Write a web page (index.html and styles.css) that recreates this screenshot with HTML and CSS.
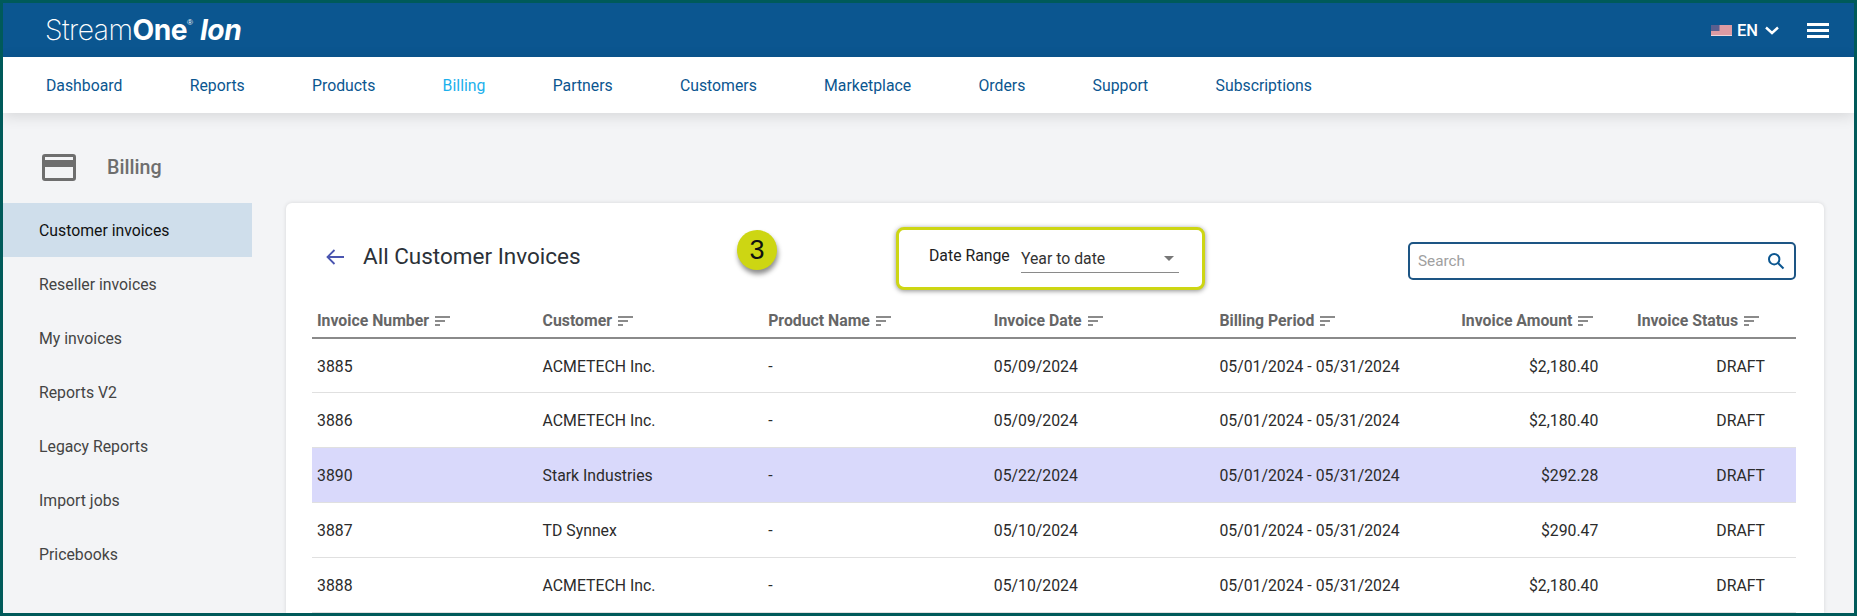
FILE: index.html
```html
<!DOCTYPE html>
<html lang="en">
<head>
<meta charset="utf-8">
<title>All Customer Invoices</title>
<link rel="stylesheet" href="styles.css">
</head>
<body>
<div class="frame">
  <header class="topbar">
    <div class="logo"><span class="logo-light">Stream</span><span class="logo-bold">One</span><sup class="logo-reg">®</sup><span class="logo-ion">Ion</span></div>
    <div class="top-actions">
      <svg class="flag" width="21" height="11" viewBox="0 0 21 11"><rect width="21" height="11" fill="#f0d4d8"/><path d="M0 1h21M0 3h21M0 5h21M0 7h21M0 9h21" stroke="#c9636f" stroke-width="1"/><rect width="8.5" height="6" fill="#5a5f8f"/></svg>
      <span class="lang">EN</span>
      <svg class="chev" width="14" height="9" viewBox="0 0 14 9"><path d="M1 1.500 7 7l6-5.500" fill="none" stroke="#fff" stroke-width="2.400"/></svg>
      <div class="burger"><i></i><i></i><i></i></div>
    </div>
  </header>
  <nav class="mainnav">
    <a>Dashboard</a><a>Reports</a><a>Products</a><a class="on">Billing</a><a>Partners</a><a>Customers</a><a>Marketplace</a><a>Orders</a><a>Support</a><a>Subscriptions</a>
  </nav>
  <div class="body">
    <aside class="side">
      <div class="side-head">
        <svg width="34" height="27" viewBox="0 0 34 27"><path fill="#6e6e6e" fill-rule="evenodd" d="M3 0h28a3 3 0 0 1 3 3v21a3 3 0 0 1-3 3H3a3 3 0 0 1-3-3V3a3 3 0 0 1 3-3Zm0 3v3h28V3H3Zm0 10v11h28V13H3Z"/></svg>
        <span>Billing</span>
      </div>
      <ul class="side-list">
        <li class="active">Customer invoices</li>
        <li>Reseller invoices</li>
        <li>My invoices</li>
        <li>Reports V2</li>
        <li>Legacy Reports</li>
        <li>Import jobs</li>
        <li>Pricebooks</li>
      </ul>
    </aside>
    <main class="card">
      <div class="badge">3</div>
      <div class="toolbar">
        <div class="title">
          <svg width="20" height="18" viewBox="0 0 20 18"><path d="M19 9H3M9.500 2 2.500 9l7 7" fill="none" stroke="#4a55b0" stroke-width="1.800"/></svg>
          <h1>All Customer Invoices</h1>
        </div>
        <div class="range">
          <span class="range-label">Date Range</span>
          <div class="select"><span>Year to date</span><i class="caret"></i></div>
        </div>
        <div class="search">
          <span>Search</span>
          <svg width="18" height="18" viewBox="0 0 18 18"><circle cx="7.200" cy="7.200" r="5.200" fill="none" stroke="#0b5690" stroke-width="2"/><path d="m11 11 5.500 5.500" stroke="#0b5690" stroke-width="2"/></svg>
        </div>
      </div>
      <table class="grid">
        <colgroup><col class="c1"><col class="c1"><col class="c1"><col class="c1"><col class="c5"><col class="c6"><col class="c7"></colgroup>
        <thead>
          <tr>
            <th>Invoice Number<svg class="sort" viewBox="0 0 15 10"><path d="M0 1h15M0 5h10M0 9h5" stroke="#666" stroke-width="1.700"/></svg></th>
            <th>Customer<svg class="sort" viewBox="0 0 15 10"><path d="M0 1h15M0 5h10M0 9h5" stroke="#666" stroke-width="1.700"/></svg></th>
            <th>Product Name<svg class="sort" viewBox="0 0 15 10"><path d="M0 1h15M0 5h10M0 9h5" stroke="#666" stroke-width="1.700"/></svg></th>
            <th>Invoice Date<svg class="sort" viewBox="0 0 15 10"><path d="M0 1h15M0 5h10M0 9h5" stroke="#666" stroke-width="1.700"/></svg></th>
            <th>Billing Period<svg class="sort" viewBox="0 0 15 10"><path d="M0 1h15M0 5h10M0 9h5" stroke="#666" stroke-width="1.700"/></svg></th>
            <th class="amt-h">Invoice Amount<svg class="sort" viewBox="0 0 15 10"><path d="M0 1h15M0 5h10M0 9h5" stroke="#666" stroke-width="1.700"/></svg></th>
            <th class="st-h">Invoice Status<svg class="sort" viewBox="0 0 15 10"><path d="M0 1h15M0 5h10M0 9h5" stroke="#666" stroke-width="1.700"/></svg></th>
          </tr>
        </thead>
        <tbody>
          <tr class="first"><td>3885</td><td>ACMETECH Inc.</td><td>-</td><td>05/09/2024</td><td>05/01/2024 - 05/31/2024</td><td class="amt">$2,180.40</td><td class="st">DRAFT</td></tr>
          <tr><td>3886</td><td>ACMETECH Inc.</td><td>-</td><td>05/09/2024</td><td>05/01/2024 - 05/31/2024</td><td class="amt">$2,180.40</td><td class="st">DRAFT</td></tr>
          <tr class="hl"><td>3890</td><td>Stark Industries</td><td>-</td><td>05/22/2024</td><td>05/01/2024 - 05/31/2024</td><td class="amt">$292.28</td><td class="st">DRAFT</td></tr>
          <tr><td>3887</td><td>TD Synnex</td><td>-</td><td>05/10/2024</td><td>05/01/2024 - 05/31/2024</td><td class="amt">$290.47</td><td class="st">DRAFT</td></tr>
          <tr><td>3888</td><td>ACMETECH Inc.</td><td>-</td><td>05/10/2024</td><td>05/01/2024 - 05/31/2024</td><td class="amt">$2,180.40</td><td class="st">DRAFT</td></tr>
        </tbody>
      </table>
    </main>
  </div>
</div>
</body>
</html>
```
FILE: styles.css
```css
* { box-sizing: border-box; }
html, body { margin: 0; height: 100%; overflow: hidden; }
body { font-family: Roboto, "Liberation Sans", sans-serif; font-size: 15.800px; color: #222; }
.frame { height: 616px; border: 3px solid #005a5a; background: #f3f4f6; overflow: hidden; display: flex; flex-direction: column; }

.topbar { height: 54px; flex: none; background: #0b5690; display: flex; align-items: center; justify-content: space-between; padding: 0 25px 0 42px; }
.logo { color: #fff; font-size: 28.200px; display: flex; align-items: baseline; letter-spacing: -0.5px; }
.logo-light { font-family: Inter, sans-serif; font-weight: 200; }
.logo-bold { font-family: Inter, sans-serif; font-weight: 700; }
.logo-reg { font-family: "Liberation Sans", sans-serif; font-size: 8px; align-self: flex-start; margin: 5px 7px 0 0; letter-spacing: 0; }
.logo-ion { font-style: italic; font-weight: 700; font-family: Inter, sans-serif; }
.top-actions { display: flex; align-items: center; }
.flag { margin-right: 5px; }
.lang { color: #fff; font-weight: 500; font-size: 16.500px; margin-right: 7px; }
.chev { margin-right: 28px; }
.burger { width: 22px; display: flex; flex-direction: column; gap: 3px; }
.burger i { display: block; height: 3px; background: #fff; }

.mainnav { height: 56px; flex: none; background: #fff; display: flex; align-items: center; gap: 67.250px; padding-left: 43px; position: relative; box-shadow: 0 3px 14px rgba(0,0,0,.12); z-index: 1; }
.mainnav a { color: #0b5690; white-space: nowrap; }
.mainnav a.on { color: #1cb0ec; }

.body { flex: 1; display: flex; min-height: 0; }
.side { width: 249px; flex: none; }
.side-head { height: 90px; display: flex; align-items: center; padding: 18px 0 0 39px; gap: 31px; color: #6e6e6e; font-weight: 500; font-size: 19.700px; }
.side-list { list-style: none; margin: 0; padding: 0; }
.side-list li { height: 54px; display: flex; align-items: center; padding: 1px 0 0 36px; color: #444; }
.side-list li.active { background: #cfdeeb; color: #111; }

.card { position: relative; margin: 90px 30px 0 34px; flex: 1; background: #fff; border-radius: 6px 6px 0 0; box-shadow: 0 0 4px rgba(0,0,0,.12); padding: 0 28px 0 26px; min-width: 0; }
.badge { position: absolute; left: 451px; top: 27px; width: 40px; height: 40px; border-radius: 50%; background: #cdd613; color: #111; font-family: "Liberation Sans", sans-serif; font-size: 27px; display: flex; align-items: center; justify-content: center; box-shadow: 1px 4px 5px rgba(0,0,0,.45); }

.toolbar { height: 102px; display: flex; position: relative; }
.title { display: flex; align-items: center; height: 54px; padding: 27px 0 0 13px; gap: 18px; box-sizing: content-box; }
.title h1 { margin: 0 0 3px; font-weight: 400; font-size: 22.500px; color: #2b3138; }
.range { position: absolute; left: 584px; top: 24px; width: 309px; height: 63px; border: 3px solid #cdd613; border-radius: 8px; box-shadow: 0 1px 5px rgba(0,0,0,.45); background: #fff; display: flex; align-items: flex-start; padding: 16px 0 0 30px; }
.range-label { width: 92px; flex: none; color: #222; }
.select { width: 158px; height: 27px; border-bottom: 1px solid #8a8a8a; display: flex; align-items: center; justify-content: space-between; padding: 1px 4px 3px 0; color: #333; }
.caret { width: 0; height: 0; border: 5px solid transparent; border-top: 5px solid #777; border-bottom: 0; margin-right: 1px; }
.search { position: absolute; right: 0; top: 39px; width: 388px; height: 38px; border: 2px solid #1d5584; border-radius: 5px; display: flex; align-items: center; justify-content: space-between; padding: 0 9px 0 8px; color: #a0a0a0; font-size: 15.300px; }

.grid { width: 100%; border-collapse: collapse; table-layout: fixed; }
.c1 { width: 225.600px; }
.c5 { width: 240px; }
.c6 { width: 149px; }
.c7 { width: auto; }
.grid th { height: 33px; padding: 0 5px 2px; text-align: left; color: #666; font-weight: 700; border-bottom: 2px solid #8a8a8a; white-space: nowrap; }
.grid th.amt-h { text-align: right; padding-right: 10px; }
.grid th.st-h { text-align: right; padding-right: 37px; }
.grid td { height: 55px; padding: 2px 5px 0; border-bottom: 1px solid #e0e0e0; color: #2b2b2b; white-space: nowrap; }
.grid tr.first td { height: 54px; }
.grid tr.hl td { background: #d9d9fb; }
.sort { width: 15px; height: 10px; margin-left: 6px; }
.grid td.amt { text-align: right; }
.grid td.st { text-align: right; padding-right: 31px; }
```
